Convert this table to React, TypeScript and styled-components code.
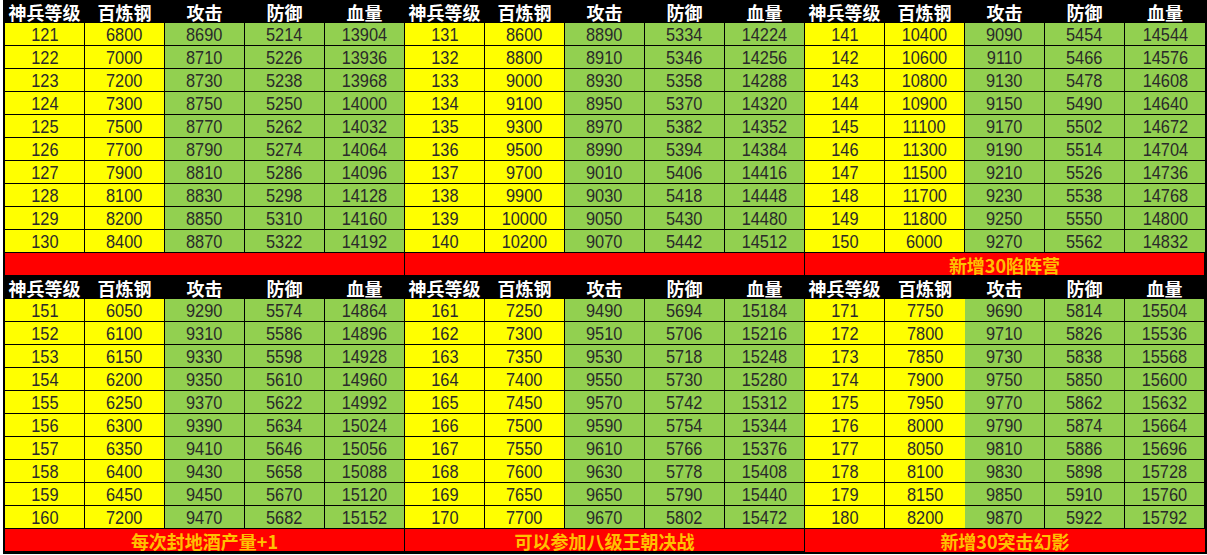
import styled, { createGlobalStyle } from "styled-components";

const GlobalStyle = createGlobalStyle`
  html, body {
    margin: 0;
    padding: 0;
    background: #ffffff;
  }
`;

const Page = styled.div`
  padding-left: 3px;
  width: 1207px;
  height: 555px;
  box-sizing: border-box;
  overflow: hidden;
`;

const Sheet = styled.div`
  display: grid;
  grid-template-columns: repeat(15, 80px);
  grid-auto-rows: 23px;
  width: 1204px;
  box-sizing: border-box;
  border-left: 2px solid #000;
  border-right: 2px solid #000;
  border-bottom: 2px solid #000;
`;

const Cell = styled.div`
  box-sizing: border-box;
  border-right: 1px solid #000;
  border-bottom: 1px solid #000;
  display: flex;
  align-items: center;
  justify-content: center;
  white-space: nowrap;
  overflow: visible;
  &:nth-child(15n) {
    border-right: none;
  }
`;

const HeaderCell = styled(Cell)`
  background: #000;
  color: #fff;
  font-family: "Noto Sans CJK SC", "Noto Sans", sans-serif;
  font-weight: 700;
  font-size: 18px;
  padding-top: 2px;
`;

const DataCell = styled(Cell)<{ $tone: "yellow" | "green" }>`
  background: ${(p) => (p.$tone === "yellow" ? "#ffff00" : "#92d050")};
  color: #2a2a2a;
  font-family: "Liberation Sans", Arial, sans-serif;
  font-size: 19px;
  padding-top: 2px;
`;

// the sheet's number font is tall and narrow
const Value = styled.span`
  display: inline-block;
  transform: scaleX(0.86);
`;

const NoteCell = styled.div`
  grid-column: span 5;
  box-sizing: border-box;
  background: #ff0000;
  color: #ffc000;
  border-right: 1px solid #000;
  border-bottom: 1px solid #000;
  display: flex;
  align-items: center;
  justify-content: center;
  font-family: "Noto Sans CJK SC", "Noto Sans", sans-serif;
  font-weight: 700;
  font-size: 18px;
  padding-top: 1px;
  &:last-child {
    border-right: none;
    border-bottom: none;
  }
`;

const headers = ["神兵等级", "百炼钢", "攻击", "防御", "血量"];

const steel: Record<number, number[]> = {
  121: [6800, 7000, 7200, 7300, 7500, 7700, 7900, 8100, 8200, 8400],
  131: [8600, 8800, 9000, 9100, 9300, 9500, 9700, 9900, 10000, 10200],
  141: [10400, 10600, 10800, 10900, 11100, 11300, 11500, 11700, 11800, 6000],
  151: [6050, 6100, 6150, 6200, 6250, 6300, 6350, 6400, 6450, 7200],
  161: [7250, 7300, 7350, 7400, 7450, 7500, 7550, 7600, 7650, 7700],
  171: [7750, 7800, 7850, 7900, 7950, 8000, 8050, 8100, 8150, 8200],
};

const bands = [
  { starts: [121, 131, 141], notes: ["", "", "新增30陷阵营"] },
  { starts: [151, 161, 171], notes: ["每次封地酒产量+1", "可以参加八级王朝决战", "新增30突击幻影"] },
];

// attack / defence / hp grow linearly with the level
function rowValues(level: number, start: number, i: number) {
  const n = level - 121;
  return [level, steel[start][i], 8690 + 20 * n, 5214 + 12 * n, 13904 + 32 * n];
}

export default function App() {
  return (
    <Page>
      <GlobalStyle />
      <Sheet>
        {bands.map((band, b) => (
          <Band key={b} starts={band.starts} notes={band.notes} />
        ))}
      </Sheet>
    </Page>
  );
}

function Band({ starts, notes }: { starts: number[]; notes: string[] }) {
  const rows = Array.from({ length: 10 }, (_, i) => i);
  return (
    <>
      {starts.map((s) =>
        headers.map((h) => <HeaderCell key={`h${s}${h}`}>{h}</HeaderCell>)
      )}
      {rows.map((i) =>
        starts.map((s) =>
          rowValues(s + i, s, i).map((v, c) => (
            <DataCell key={`${s}-${i}-${c}`} $tone={c < 2 ? "yellow" : "green"}>
              <Value>{v}</Value>
            </DataCell>
          ))
        )
      )}
      {notes.map((n, k) => (
        <NoteCell key={`n${k}`}>{n}</NoteCell>
      ))}
    </>
  );
}
